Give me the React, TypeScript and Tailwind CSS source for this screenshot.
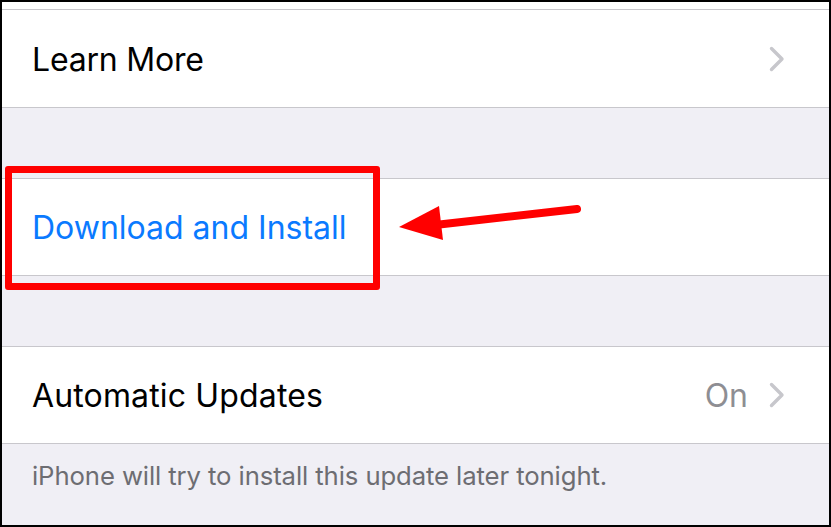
import React from 'react';

const Chevron: React.FC = () => (
  <svg width="16" height="26" viewBox="0 0 16 26" fill="none" className="shrink-0">
    <path d="M2.5 2.5 L13 13 L2.5 23.5" stroke="#c7c7cc" strokeWidth="3.4" strokeLinecap="round" strokeLinejoin="round" />
  </svg>
);

const Row: React.FC<{ children: React.ReactNode; className?: string }> = ({ children, className }) => (
  <div className={`h-[96px] bg-white flex items-center pl-[30px] pr-[44px] ${className ?? ''}`}>{children}</div>
);

export default function App() {
  return (
    <div
      className="relative w-[831px] h-[527px] border-2 border-black bg-[#f0eff5] overflow-hidden flex flex-col"
      style={{ fontFamily: 'Inter, "Noto Sans", sans-serif' }}
    >
      <div className="h-[7px] bg-white shrink-0" />
      <div className="border-t border-b border-[#c8c7cc] shrink-0">
        <Row className="h-[97px] justify-between">
          <span className="text-[32px] text-black tracking-[-0.2px] translate-y-[1px]">Learn More</span>
          <Chevron />
        </Row>
      </div>

      <div className="h-[70px] shrink-0" />

      <div className="border-t border-b border-[#c8c7cc] shrink-0">
        <Row>
          <span className="text-[32px] text-[#0a7aff] translate-y-[1px]">Download and Install</span>
        </Row>
      </div>

      <div className="h-[70px] shrink-0" />

      <div className="border-t border-b border-[#c8c7cc] shrink-0">
        <Row className="justify-between">
          <span className="text-[32px] text-black tracking-[0.15px] translate-y-[1px]">Automatic Updates</span>
          <div className="flex items-center gap-[21px]">
            <span className="text-[32px] text-[#8e8e93] translate-y-[1px]">On</span>
            <Chevron />
          </div>
        </Row>
      </div>

      <div className="pl-[30px] pt-[13px] text-[25.7px] tracking-[-0.1px] text-[#6d6d72]">
        iPhone will try to install this update later tonight.
      </div>

      {/* annotation box */}
      <div className="absolute left-[3px] top-[164px] w-[375px] h-[124px] border-[7px] border-[#ff0000] rounded-[3px]" />

      {/* annotation arrow */}
      <svg className="absolute left-[-2px] top-[-2px]" width="831" height="527" viewBox="0 0 831 527">
        <line x1="577" y1="209" x2="435" y2="225" stroke="#ff0000" strokeWidth="8" strokeLinecap="round" />
        <polygon points="399,227 439,206 443,240" fill="#ff0000" />
      </svg>
    </div>
  );
}
